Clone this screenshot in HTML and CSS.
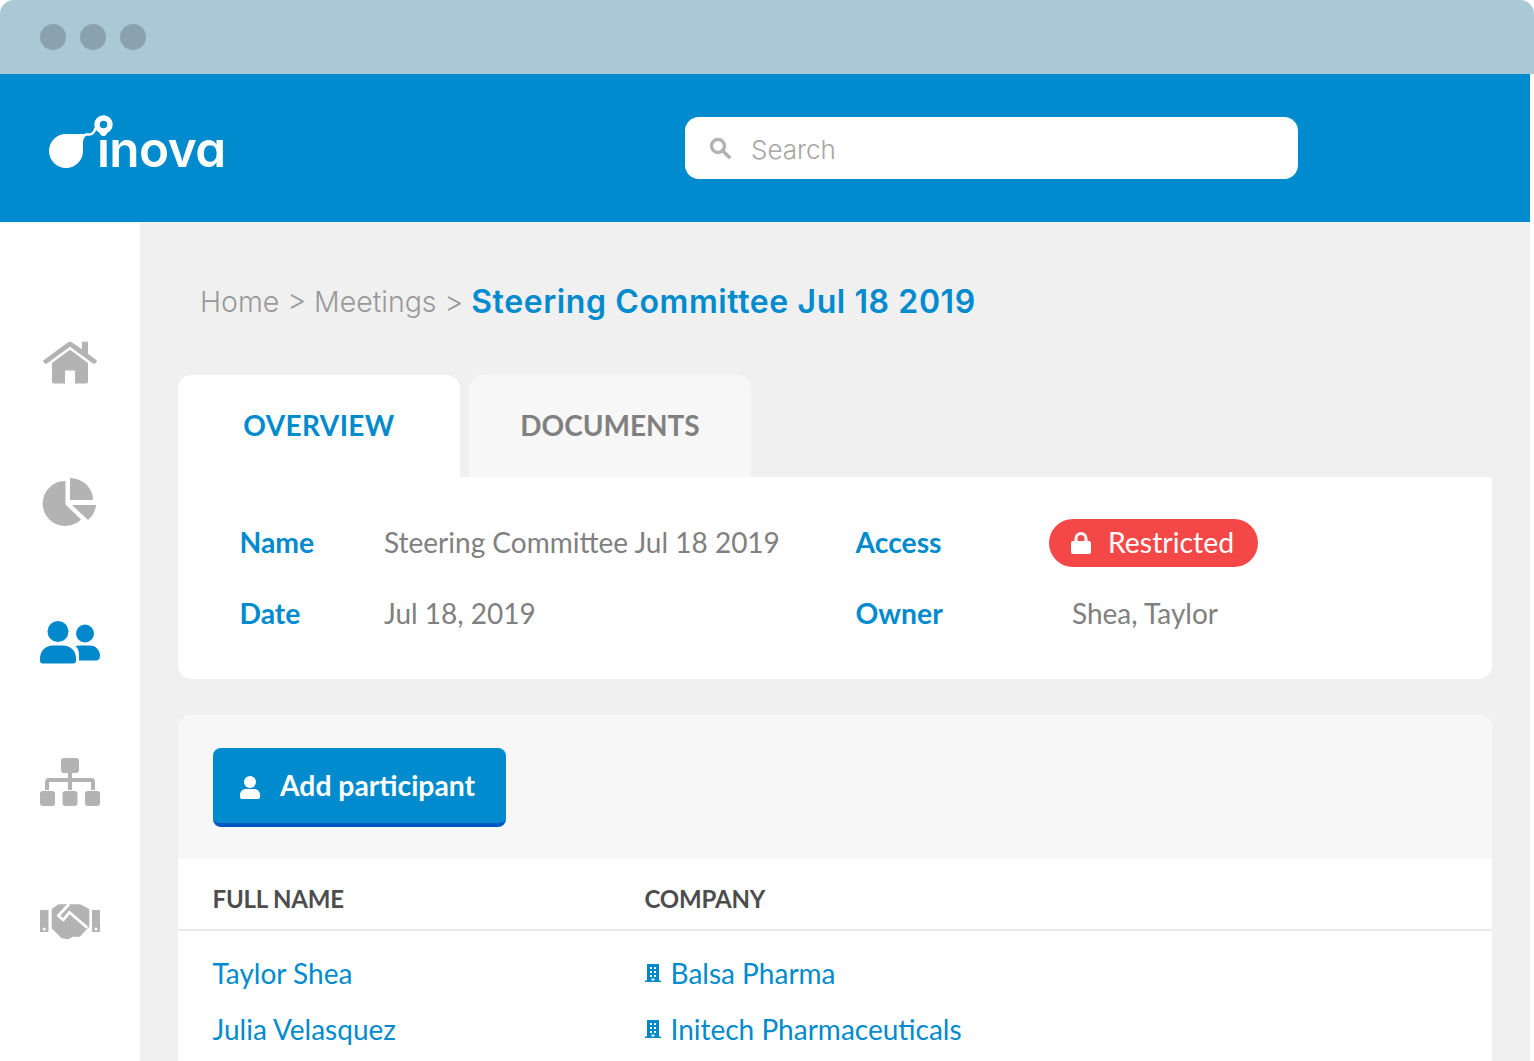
FILE: index.html
```html
<!DOCTYPE html>
<html lang="en">
<head>
<meta charset="utf-8">
<title>inova</title>
<link rel="stylesheet" href="styles.css">
</head>
<body>
<div class="window">
  <div class="titlebar"><span class="dot"></span><span class="dot"></span><span class="dot"></span></div>
  <header class="header">
    <div class="logo">
      <span class="logo-text">inova</span>
      <svg class="logo-mark" width="70" height="60" viewBox="0 0 70 60"><path d="M17 20H40C37 21 34 24 34 29V37A17 17 0 0 1 0 37A17 17 0 0 1 17 20Z" fill="#fff"/><path d="M36 20.500H40C44 20.500 45.500 18 46.500 14" fill="none" stroke="#fff" stroke-width="2.500"/><circle cx="54.500" cy="10.500" r="6.500" fill="#008bce" stroke="#fff" stroke-width="5.500"/></svg>
    </div>
    <div class="search">
      <svg class="search-icon" width="22" height="22" viewBox="0 0 22 22"><circle cx="9" cy="9" r="6.500" fill="none" stroke="#b3b3b3" stroke-width="3.400"/><path d="M13.500 13.500L20 20" stroke="#b3b3b3" stroke-width="3.800" stroke-linecap="round"/></svg>
      <span class="search-text">Search</span>
    </div>
  </header>
  <div class="body">
    <nav class="sidebar">
      <div class="nav-item"><svg width="60" height="50" viewBox="0 0 60 50"><g transform="translate(0 3.500) scale(1 .88)"><path fill="#b3b3b3" d="M3.500 22.500L27.500 2.500Q30 .5 32.500 2.500L42 10V1.500H48V15L56.500 22.500Q57.500 23.500 56.500 24.500L55 26Q54 27 53 26L30 7L7 26Q6 27 5 26L3.500 24.500Q2.500 23.500 3.500 22.500Z"/><path fill="#b3b3b3" d="M30 10.500L48 25.500V47Q48 49 46 49H35V34H25V49H14Q12 49 12 47V25.500Z"/></g></svg></div>
      <div class="nav-item"><svg width="60" height="50" viewBox="0 0 60 50"><path fill="#b3b3b3" d="M25.500 4V27.500L41 42.500A22.500 22.500 0 1 1 25.500 4Z"/><path fill="#b3b3b3" d="M30 1A23 22 0 0 1 53 23H30Z"/><path fill="#b3b3b3" d="M32 28H56A22 22 0 0 1 48 43Z"/></svg></div>
      <div class="nav-item"><svg width="60" height="50" viewBox="0 0 60 50"><g transform="translate(0 -1.500)"><circle cx="18" cy="16" r="10.500" fill="#0088cc"/><circle cx="45" cy="18" r="9" fill="#0088cc"/><path fill="#0088cc" d="M0 43C0 35 6 30 13 30H23C30 30 36 35 36 43V45Q36 48 33 48H3Q0 48 0 45Z"/><path fill="#0088cc" d="M39 30H50C56 30 60 35 60 40Q60 45 56 45H39V39Q39 34 35.500 30.500Z"/></g></svg></div>
      <div class="nav-item"><svg width="60" height="50" viewBox="0 0 60 50"><rect x="21" y="1" width="18" height="15" rx="3" fill="#b3b3b3"/><path d="M30 16V33M7 33V25Q7 23 9 23H51Q53 23 53 25V33" fill="none" stroke="#b3b3b3" stroke-width="4"/><rect x="0" y="34" width="15" height="15" rx="3" fill="#b3b3b3"/><rect x="22.500" y="34" width="15" height="15" rx="3" fill="#b3b3b3"/><rect x="45" y="34" width="15" height="15" rx="3" fill="#b3b3b3"/></svg></div>
      <div class="nav-item"><svg width="60" height="50" viewBox="0 0 60 50"><path fill-rule="evenodd" fill="#b3b3b3" d="M0 13H8.500V35H0ZM2.700 32a1.500 1.500 0 1 0 3 0a1.500 1.500 0 1 0 -3 0ZM52 13H60V35H52ZM54.500 32a1.500 1.500 0 1 0 3 0a1.500 1.500 0 1 0 -3 0Z"/><path fill="#b3b3b3" d="M11.700 12L18.300 7.300H40L49.300 12V29.700L45 34L40 39.700H33.300L28.300 42.300L21.700 41.300L11.700 31.300Z"/><path fill="none" stroke="#fff" stroke-width="2.800" stroke-linejoin="round" d="M29 7.300L18.300 18.700L23.300 23L29.300 15.300L47.300 30.700"/></svg></div>
    </nav>
    <main class="main">
      <div class="crumbs"><span class="crumb-muted">Home &gt; Meetings &gt;</span> <span class="crumb-current">Steering Committee Jul 18 2019</span></div>
      <div class="tabs">
        <div class="tab tab-active">OVERVIEW</div>
        <div class="tab">DOCUMENTS</div>
      </div>
      <section class="info">
        <div class="label">Name</div>
        <div class="value">Steering Committee Jul 18 2019</div>
        <div class="label">Access</div>
        <div><span class="pill"><svg width="20" height="22" viewBox="0 0 20 22"><path fill="none" stroke="#fff" stroke-width="3" d="M5 10V6.500A5 5 0 0 1 15 6.500V10"/><rect x="0" y="9" width="20" height="13" rx="2" fill="#fff"/></svg><span class="pill-text">Restricted</span></span></div>
        <div class="label">Date</div>
        <div class="value">Jul 18, 2019</div>
        <div class="label">Owner</div>
        <div class="value value-owner">Shea, Taylor</div>
      </section>
      <section class="people">
        <div class="toolbar">
          <div class="button"><svg class="button-icon" width="20" height="23" viewBox="0 0 20 23"><circle cx="10" cy="6" r="6" fill="#fff"/><path fill="#fff" d="M0 19C0 15 3 13 6 13H14C17 13 20 15 20 19V21Q20 23 18 23H2Q0 23 0 21Z"/></svg>Add participant</div>
        </div>
        <div class="table">
          <div class="row row-head"><div>FULL NAME</div><div>COMPANY</div></div>
          <div class="row row-first"><a>Taylor Shea</a><a class="company"><svg width="16" height="18" viewBox="0 0 16 18"><path fill="#0088cc" fill-rule="evenodd" d="M2 0H14V16.500H16V18H0V16.500H2ZM5 3V5H7V3ZM9 3V5H11V3ZM5 7V9H7V7ZM9 7V9H11V7ZM5 11V13H7V11ZM9 11V13H11V11ZM6.500 14.500V16.500H9.500V14.500Z"/></svg>Balsa Pharma</a></div>
          <div class="row"><a>Julia Velasquez</a><a class="company"><svg width="16" height="18" viewBox="0 0 16 18"><path fill="#0088cc" fill-rule="evenodd" d="M2 0H14V16.500H16V18H0V16.500H2ZM5 3V5H7V3ZM9 3V5H11V3ZM5 7V9H7V7ZM9 7V9H11V7ZM5 11V13H7V11ZM9 11V13H11V11ZM6.500 14.500V16.500H9.500V14.500Z"/></svg>Initech Pharmaceuticals</a></div>
        </div>
      </section>
    </main>
  </div>
</div>
</body>
</html>
```
FILE: styles.css
```css
* { box-sizing: border-box; }
html, body { margin: 0; padding: 0; background: #fff; }
body { width: 1534px; height: 1061px; overflow: hidden; font-family: "Lato", "Liberation Sans", sans-serif; }
.window { display: flex; flex-direction: column; height: 1061px; }
.titlebar { height: 74px; flex: none; background: #aac8d6; border-radius: 14px 14px 0 0; display: flex; align-items: center; gap: 14px; padding-left: 40px; }
.dot { width: 26px; height: 26px; border-radius: 50%; background: #8aa2ad; }
.header { width: 1530px; height: 148px; flex: none; background: #008bce; display: flex; align-items: center; }
.logo { width: 685px; flex: none; height: 100%; padding-left: 49px; display: flex; align-items: flex-start; }
.logo-mark { position: relative; z-index: 1; margin-top: 40px; margin-left: -178px; flex: none; }
.logo-text { width: 178px; padding-left: 48px; flex: none; font-family: "Inter", "Lato", sans-serif; font-feature-settings: "cv11"; font-size: 49.500px; font-weight: 600; letter-spacing: -.6px; color: #fff; line-height: 60px; margin-top: 45px; }
.search { width: 613px; height: 62px; background: #fff; border-radius: 14px; display: flex; align-items: center; padding-left: 24px; gap: 20px; }
.search-text { font-family: "Inter", "Lato", sans-serif; font-size: 26px; font-weight: 300; color: #a6a6a6; padding-top: 2px; }
.body { flex: 1; display: flex; width: 1530px; min-height: 0; }
.sidebar { width: 140px; flex: none; background: #fff; padding-top: 70px; }
.nav-item { height: 140px; display: flex; align-items: center; justify-content: center; }
.main { flex: 1; background: #f0f0f0; padding: 50px 38px 0; overflow: hidden; display: flex; flex-direction: column; }
.crumbs { height: 60px; flex: none; margin-bottom: 43px; padding: 0 0 2px 22px; display: flex; align-items: center; gap: 8px; font-family: "Inter", "Lato", sans-serif; }
.crumb-muted { font-size: 28.500px; font-weight: 300; color: #999; }
.crumb-current { font-size: 32px; font-weight: 600; letter-spacing: .6px; color: #008bce; }
.tabs { display: flex; gap: 9px; flex: none; }
.tab { width: 282px; height: 102px; border-radius: 14px 14px 0 0; background: #f7f7f7; color: #808080; font-size: 28px; font-weight: 700; padding-bottom: 3px; display: flex; align-items: center; justify-content: center; }
.tab-active { background: #fff; color: #008bce; letter-spacing: .4px; }
.info { background: #fff; border-radius: 0 0 14px 14px; height: 202px; flex: none; padding: 42px 0 0 62px; display: grid; grid-template-columns: 144px 472px 193px 1fr; grid-auto-rows: 48px; row-gap: 23px; align-items: center; font-size: 28px; }
.label { font-size: 28.300px; font-weight: 700; color: #008bce; padding-bottom: 3px; margin-left: -.5px; }
.value { color: #808080; padding-bottom: 3px; }
.value-owner { padding-left: 23px; }
.pill { display: inline-flex; align-items: center; gap: 17px; height: 48px; width: 209px; padding-left: 22px; border-radius: 24px; background: #f44747; color: #fff; font-size: 28.400px; }
.pill-text { padding-bottom: 3px; }
.people { flex: 1; margin-top: 36px; background: #fff; border-radius: 14px 14px 0 0; overflow: hidden; }
.toolbar { height: 144px; background: #f7f7f7; padding: 33px 35px 0; }
.button { width: 293px; height: 79px; background: #008bce; border-bottom: 4px solid #0059c2; border-radius: 8px; display: flex; align-items: center; gap: 20px; padding: 0 0 1px 27px; color: #fff; font-size: 28.300px; font-weight: 700; }
.button-icon { margin-top: 5px; }
.row { display: grid; grid-template-columns: 432px 1fr; height: 56px; padding: 0 0 3px 34.500px; align-items: center; font-size: 28px; color: #008bce; }
.row-head { height: 72px; padding-top: 8px; padding-bottom: 0; border-bottom: 2px solid #e8e8e8; font-size: 24px; font-weight: 700; color: #4d4d4d; letter-spacing: -.2px; }
.row-first { margin-top: 15px; }
.company { display: flex; align-items: center; gap: 10px; }
```
